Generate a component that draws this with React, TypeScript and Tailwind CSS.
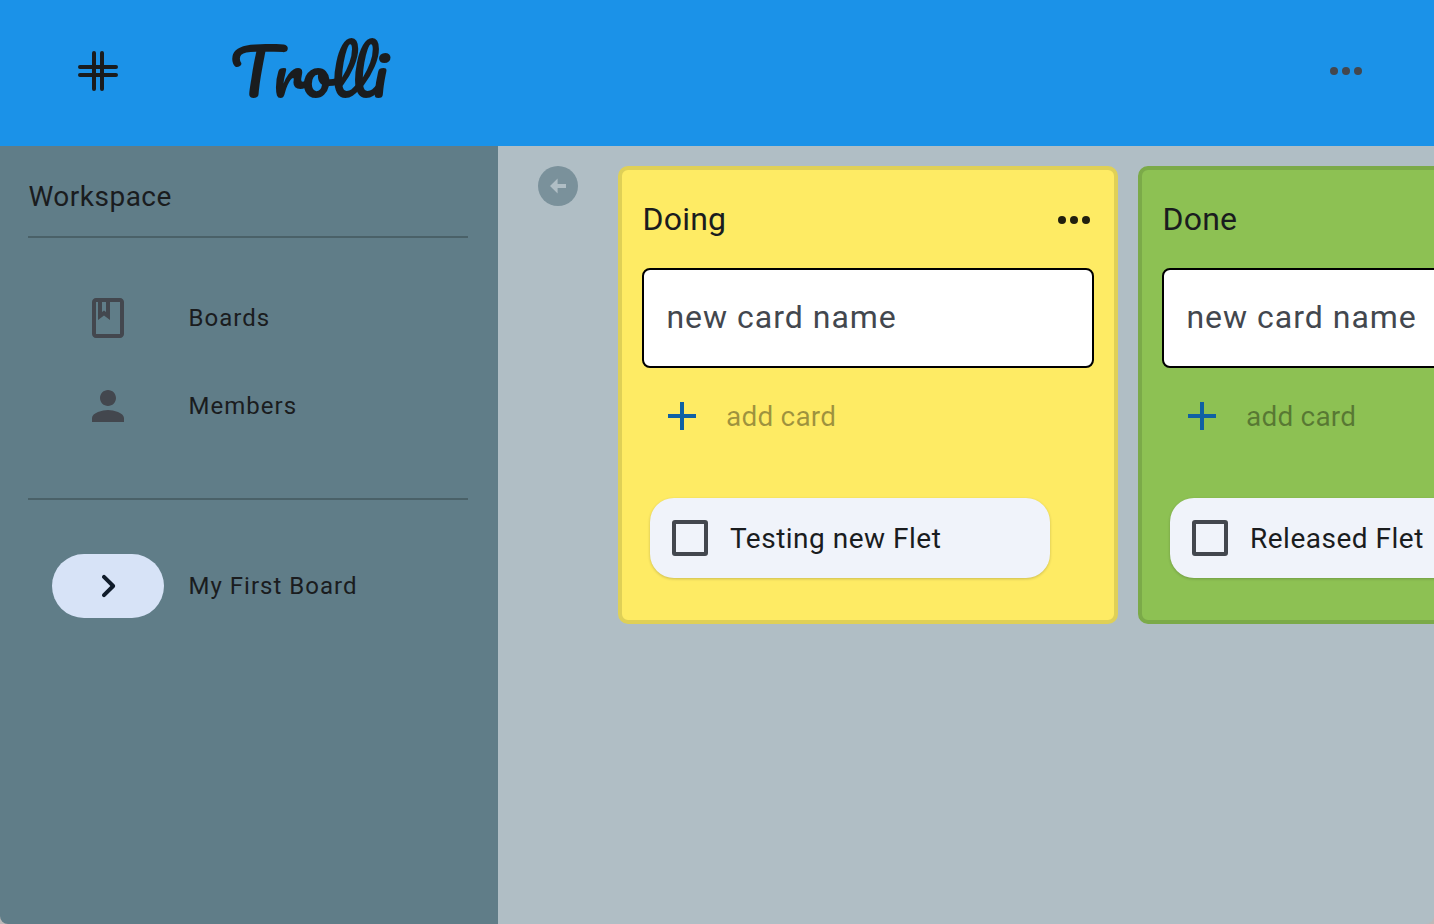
import React from "react";

function Dots({ className }: { className: string }) {
  return (
    <svg viewBox="0 0 32 8" className={`h-2 w-8 ${className}`} fill="currentColor" aria-hidden="true">
      <circle cx="4" cy="4" r="4" />
      <circle cx="16" cy="4" r="4" />
      <circle cx="28" cy="4" r="4" />
    </svg>
  );
}

function Icon({ d }: { d: string }) {
  return (
    <svg viewBox="0 0 24 24" className="size-12" fill="currentColor" aria-hidden="true">
      <path d={d} />
    </svg>
  );
}

const BOOK =
  "M18 2H6c-1.1 0-2 .9-2 2v16c0 1.1.9 2 2 2h12c1.1 0 2-.9 2-2V4c0-1.1-.9-2-2-2zM9 4h2v5l-1-.75L9 9V4zm9 16H6V4h1v9l3-2.25L13 13V4h5v16z";
const PERSON =
  "M12 12c2.21 0 4-1.79 4-4s-1.79-4-4-4-4 1.79-4 4 1.79 4 4 4zm0 2c-2.67 0-8 1.34-8 4v2h16v-2c0-2.66-5.33-4-8-4z";
const CHEVRON =
  "M9.29 6.71c-.39.39-.39 1.02 0 1.41L13.17 12l-3.88 3.88c-.39.39-.39 1.02 0 1.41.39.39 1.02.39 1.41 0l4.59-4.59c.39-.39.39-1.02 0-1.41L10.7 6.7c-.38-.38-1.02-.38-1.41.01z";

function NavItem({ icon, label, selected = false }: { icon: string; label: string; selected?: boolean }) {
  return (
    <li className="flex h-16 items-center gap-[24.6px]">
      <span
        className={
          selected
            ? "flex h-16 w-28 items-center justify-center rounded-full bg-[#d7e3f7] text-[#101c2b]"
            : "flex h-16 w-28 items-center justify-center text-[#43474e]"
        }
      >
        <Icon d={icon} />
      </span>
      <span className="text-2xl tracking-[1px]">{label}</span>
    </li>
  );
}

function BoardList({ title, item, className }: { title: string; item: string; className: string }) {
  return (
    <section className={`flex h-[458px] w-[500px] shrink-0 flex-col rounded-[10px] border-4 px-5 ${className}`}>
      <header className="flex h-[98px] items-center justify-between pr-1">
        <h2 className="pl-[0.4px] text-[32px] leading-10 tracking-[0.25px]">{title}</h2>
        <Dots className="mt-0.5 text-black/87" />
      </header>
      <div className="flex h-[100px] shrink-0 items-center rounded-lg border-2 border-black bg-white pr-[22px] pb-0.5 pl-[22.4px] text-[32px] tracking-[1px] text-[#43474e]">
        new card name
      </div>
      <button className="flex h-24 items-center gap-[30px] pl-[26px] text-left">
        <svg viewBox="0 0 28 28" className="size-7 text-[#0f61a4]" stroke="currentColor" strokeWidth="4" aria-hidden="true">
          <path d="M14 0v28M0 14h28" />
        </svg>
        <span className="pt-0.5 text-[28px] tracking-[0.2px] text-black/38">add card</span>
      </button>
      <div className="mt-[34px] ml-2 flex h-20 w-[400px] items-center gap-[22px] rounded-3xl bg-[#f0f3fa] pl-[22px] shadow-[0_1px_3px_rgba(0,0,0,0.2)]">
        <span className="size-9 rounded-[3px] border-4 border-[#43474e]" />
        <span className="pt-0.5 text-[28px] tracking-[0.5px] whitespace-nowrap">{item}</span>
      </div>
    </section>
  );
}

export default function App() {
  return (
    <div className="h-[924px] w-[1434px] overflow-hidden bg-[#bcb9b9] font-['Roboto',sans-serif] text-[#1a1c1e]">
      <div className="flex h-full flex-col overflow-hidden rounded-b-[8px]">
        <header className="flex h-[146px] shrink-0 items-center bg-[#1b92e8] pr-[72px] pb-1 pl-[78px]">
          <svg viewBox="0 0 40 40" className="size-10" stroke="currentColor" strokeWidth="4" strokeLinecap="round" aria-hidden="true">
            <path d="M16 2v36M24 2v36M2 16h36M2 24h36" />
          </svg>
          <h1 className="ml-[112px] font-['Pacifico',cursive] text-[64px] leading-none font-normal">Trolli</h1>
          <Dots className="ml-auto text-[#43474e]" />
        </header>
        <div className="flex min-h-0 flex-1">
          <aside className="w-[498px] shrink-0 bg-[#607d88] pr-[30px] pl-7">
            <h2 className="flex h-[90px] items-center pt-3 pl-[0.4px] text-[28px] tracking-[0.5px]">Workspace</h2>
            <hr className="h-0.5 border-0 bg-[#4a6168]" />
            <ul className="mt-12 flex flex-col gap-6 pl-6">
              <NavItem icon={BOOK} label="Boards" />
              <NavItem icon={PERSON} label="Members" />
            </ul>
            <hr className="mt-[60px] h-0.5 border-0 bg-[#4a6168]" />
            <ul className="mt-[54px] pl-6">
              <NavItem icon={CHEVRON} label="My First Board" selected />
            </ul>
          </aside>
          <main className="flex min-w-0 flex-1 items-start overflow-hidden bg-[#b0bec5] pt-5 pl-10">
            <button className="mr-10 flex size-10 shrink-0 items-center justify-center rounded-full bg-[#7a919b] text-[#b0bec5]">
              <svg viewBox="0 0 16 16" className="size-4" fill="currentColor" aria-hidden="true">
                <path d="M0 8 7.6.4V6H16v4H7.6v5.6z" />
              </svg>
            </button>
            <div className="flex gap-5">
              <BoardList title="Doing" item="Testing new Flet" className="border-[#dfd057] bg-[#feeb64]" />
              <BoardList title="Done" item="Released Flet" className="border-[#7baa49] bg-[#8dc153]" />
            </div>
          </main>
        </div>
      </div>
    </div>
  );
}
